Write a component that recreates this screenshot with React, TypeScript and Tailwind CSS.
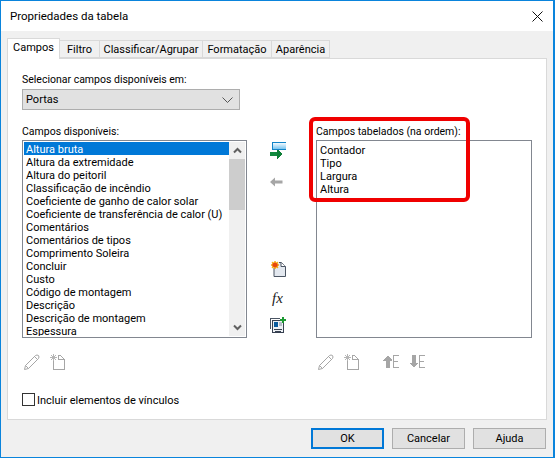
const FONT = "font-['Roboto','Lato',sans-serif]";

const available = [
  "Altura bruta", "Altura da extremidade", "Altura do peitoril", "Classificação de incêndio",
  "Coeficiente de ganho de calor solar", "Coeficiente de transferência de calor (U)", "Comentários",
  "Comentários de tipos", "Comprimento Soleira", "Concluir", "Custo", "Código de montagem",
  "Descrição", "Descrição de montagem", "Espessura",
];
const chosen = ["Contador", "Tipo", "Largura", "Altura"];
const tabs = [
  { name: "Filtro", w: "w-[40px]" },
  { name: "Classificar/Agrupar", w: "w-[103px]" },
  { name: "Formatação", w: "w-[69px]" },
  { name: "Aparência", w: "w-[58px]" },
];

function Pencil() {
  return (
    <svg width="16" height="16" viewBox="0 0 16 16" fill="none" stroke="#a6a6a6" strokeWidth="1">
      <path d="M0.5 15.5 L1.5 11.5 L11.5 1.5 Q13 0.5 14.5 1.5 Q15.5 3 14.5 4.5 L4.5 14.5 Z M1.5 11.5 L4.5 14.5 M10.5 2.5 L13.5 5.5" />
    </svg>
  );
}
function GrayPage() {
  return (
    <svg width="15" height="16" viewBox="0 0 15 16" fill="none" stroke="#a6a6a6" strokeWidth="1" shapeRendering="crispEdges">
      <path d="M3.5 6 V15.5 H14.5 V5.5 L10.5 1.5 H8.5 V5.5 H14.5" />
      <path d="M1 1 L6 6 M6 1 L1 6 M3.5 0 V7 M0 3.5 H7" stroke="#b5b5b5" />
    </svg>
  );
}
function MoveE({ up }: { up: boolean }) {
  return (
    <svg width="17" height="15" viewBox="0 0 17 15" fill="none" shapeRendering="crispEdges">
      <path d={up ? "M5 1 L9.5 6.5 H7 V14 H3 V6.5 H0.5 Z" : "M3 1 H7 V8.5 H9.5 L5 14 L0.5 8.5 H3 Z"} fill="#a6a6a6" />
      <path d="M16 1.5 H10.5 V13.5 H16 M10.5 7.5 H15" stroke="#a6a6a6" />
    </svg>
  );
}
function AddField() {
  return (
    <svg width="16" height="17" viewBox="0 0 16 17" fill="none" shapeRendering="crispEdges">
      <defs>
        <linearGradient id="addFieldFill" x1="0" y1="0" x2="0" y2="1">
          <stop offset="0" stopColor="#ffffff" />
          <stop offset="1" stopColor="#6fc0ee" />
        </linearGradient>
      </defs>
      <rect x="2.5" y="0.5" width="14" height="7" fill="url(#addFieldFill)" stroke="#1284c8" />
      <rect x="0" y="10" width="8" height="4" fill="#118a3e" />
      <path d="M7 8 V16.5 H8 L12.5 12 L8 8 Z" fill="#0e7f37" />
    </svg>
  );
}
function RemoveField() {
  return (
    <svg width="13" height="10" viewBox="0 0 13 10">
      <path d="M0 5 L5 0.5 V3.5 H12.5 V6.5 H5 V9.5 Z" fill="#a6a6a6" />
    </svg>
  );
}
function NewParam() {
  return (
    <svg width="15" height="16" viewBox="0 0 15 16" fill="none">
      <path d="M3 7 V15.5 H14.5 V5.5 L10.5 1.5 H8" fill="#e3e8ef" stroke="#4b5563" />
      <path d="M10 1.5 V5.5 H14.5" fill="#fff" stroke="#4b5563" />
      <path d="M4 0 L5 2 L7 1 L6.3 3 L8 4 L6.3 5 L7 7 L5 6 L4 8 L3 6 L1 7 L1.7 5 L0 4 L1.7 3 L1 1 L3 2 Z" fill="#e8480c" stroke="#f7b500" strokeWidth="0.7" />
    </svg>
  );
}
function Fx() {
  return (
    <span className="block font-['Liberation_Serif',serif] italic text-[15px] leading-[14px] text-[#222]">
      fx
    </span>
  );
}
function AddCalc() {
  return (
    <svg width="16" height="16" viewBox="0 0 16 16" fill="none" shapeRendering="crispEdges">
      <path d="M0.5 12 V1.5 H10" stroke="#4b5563" />
      <rect x="2.5" y="3.5" width="11" height="12" fill="#eef1f5" stroke="#374151" />
      <rect x="4" y="5" width="4" height="5" fill="#0b5c9e" />
      <rect x="9" y="5" width="3" height="4" fill="#b7bec8" />
      <path d="M4 12.5 H12 M5 14 H11" stroke="#374151" />
      <path d="M13 0 V6 M10 3 H16" stroke="#1d9a33" strokeWidth="2" />
    </svg>
  );
}
function Chevron({ up, color = "#606060" }: { up: boolean; color?: string }) {
  return (
    <svg width="9" height="7" viewBox="0 0 9 7" fill="none">
      <path d={up ? "M1 5.5 L4.5 2 L8 5.5" : "M1 1.5 L4.5 5 L8 1.5"} stroke={color} strokeWidth="2" />
    </svg>
  );
}

function Button({ label, primary }: { label: string; primary?: boolean }) {
  return (
    <button
      className={`w-[73px] h-[21px] bg-[#e1e1e1] text-black flex items-center justify-center ${
        primary ? "border-2 border-[#0078d7]" : "border border-[#adadad]"
      }`}
    >
      {label}
    </button>
  );
}

export default function App() {
  return (
    <div className={`${FONT} w-[555px] h-[458px] bg-[#f0f0f0] border border-[#0a84dc] border-r-2 flex flex-col overflow-hidden text-[11px] leading-[13px] text-black relative`}>
      <div className="h-[30px] bg-white flex items-center justify-between pl-[9px] pr-[10px] shrink-0">
        <span className="text-[11.5px]">Propriedades da tabela</span>
        <svg width="11" height="11" viewBox="0 0 11 11" stroke="#111" strokeWidth="1">
          <path d="M0.5 0.5 L10.5 10.5 M10.5 0.5 L0.5 10.5" />
        </svg>
      </div>

      <div className="flex-1 flex flex-col pl-[6px] pr-[6px]">
        <div className="flex items-end h-[27px] shrink-0 relative z-10">
          <div className="w-[53px] h-[21px] bg-white border border-[#d9d9d9] border-b-0 flex items-start justify-center pt-[2px] -mb-px">Campos</div>
          {tabs.map((t) => (
            <div key={t.name} className={`${t.w} h-[18px] bg-[#f0f0f0] border border-[#d9d9d9] border-l-0 flex items-center justify-center whitespace-nowrap`}>
              {t.name}
            </div>
          ))}
        </div>

        <div className="h-[362px] bg-white border border-[#d9d9d9] pl-[14px] pr-[13px] pt-[13px] flex flex-col shrink-0">
          <div className="h-[15px] flex items-center text-[10.5px]">Selecionar campos disponíveis em:</div>
          <div className="mt-[2px] w-[218px] h-[21px] bg-[#e1e1e1] border border-[#adadad] flex items-center justify-between pl-[3px] pr-[6px]">
            <span>Portas</span>
            <svg width="11" height="6" viewBox="0 0 11 6" fill="none" stroke="#555">
              <path d="M0.5 0.5 L5.5 5.5 L10.5 0.5" />
            </svg>
          </div>

          <div className="flex mt-[13px]">
            <div className="w-[225px] shrink-0">
              <div className="h-[16px] flex items-center text-[10.5px]">Campos disponíveis:</div>
              <div className="mt-[1px] h-[198px] border border-[#828790] flex p-px">
                <div className="flex-1 flex flex-col min-w-0 overflow-hidden">
                  {available.map((f, i) => (
                    <div key={f} className={`h-[13px] shrink-0 pl-[2px] pt-[2px] leading-[11px] whitespace-nowrap ${i === 0 ? "bg-[#0078d7] text-white" : ""}`}>
                      {f}
                    </div>
                  ))}
                </div>
                <div className="w-[16px] shrink-0 bg-[#f0f0f0] flex flex-col">
                  <div className="h-[17px] flex items-center justify-center"><Chevron up /></div>
                  <div className="h-[51px] bg-[#cdcdcd]" />
                  <div className="flex-1" />
                  <div className="h-[17px] flex items-center justify-center"><Chevron up={false} /></div>
                </div>
              </div>
            </div>

            <div className="w-[69px] shrink-0 flex flex-col items-start pt-[19px] pl-[23px]">
              <AddField />
              <div className="mt-[18px] h-[10px]"><RemoveField /></div>
              <div className="mt-[74px] ml-[1px]"><NewParam /></div>
              <div className="mt-[14px] ml-[2px] h-[14px]"><Fx /></div>
              <div className="mt-[12px]"><AddCalc /></div>
            </div>

            <div className="w-[216px] shrink-0">
              <div className="h-[16px] flex items-center text-[10.5px]">Campos tabelados (na ordem):</div>
              <div className="mt-[1px] h-[198px] border border-[#828790] pt-[2px] pl-[3px]">
                {chosen.map((f) => (
                  <div key={f} className="h-[13px] pt-[2px] leading-[11px]">{f}</div>
                ))}
              </div>
            </div>
          </div>

          <div className="flex mt-[16px] h-[16px]">
            <div className="w-[294px] shrink-0 flex pl-[2px] gap-[10px]">
              <Pencil />
              <GrayPage />
            </div>
            <div className="flex pl-[2px]">
              <Pencil />
              <div className="ml-[10px]"><GrayPage /></div>
              <div className="ml-[24px]"><MoveE up /></div>
              <div className="ml-[9px]"><MoveE up={false} /></div>
            </div>
          </div>

          <div className="flex items-center mt-[23px] h-[13px]">
            <div className="w-[13px] h-[13px] border border-[#333] bg-white shrink-0" />
            <span className="ml-[2px] pt-[2px]">Incluir elementos de vínculos</span>
          </div>
        </div>

        <div className="flex justify-end gap-[8px] pt-[8px] mr-px">
          <Button label="OK" primary />
          <Button label="Cancelar" />
          <Button label="Ajuda" />
        </div>
      </div>

      <div className="absolute left-[308px] top-[116px] w-[161px] h-[85px] border-[4px] border-[#f00000] rounded-[6px]" />
    </div>
  );
}
